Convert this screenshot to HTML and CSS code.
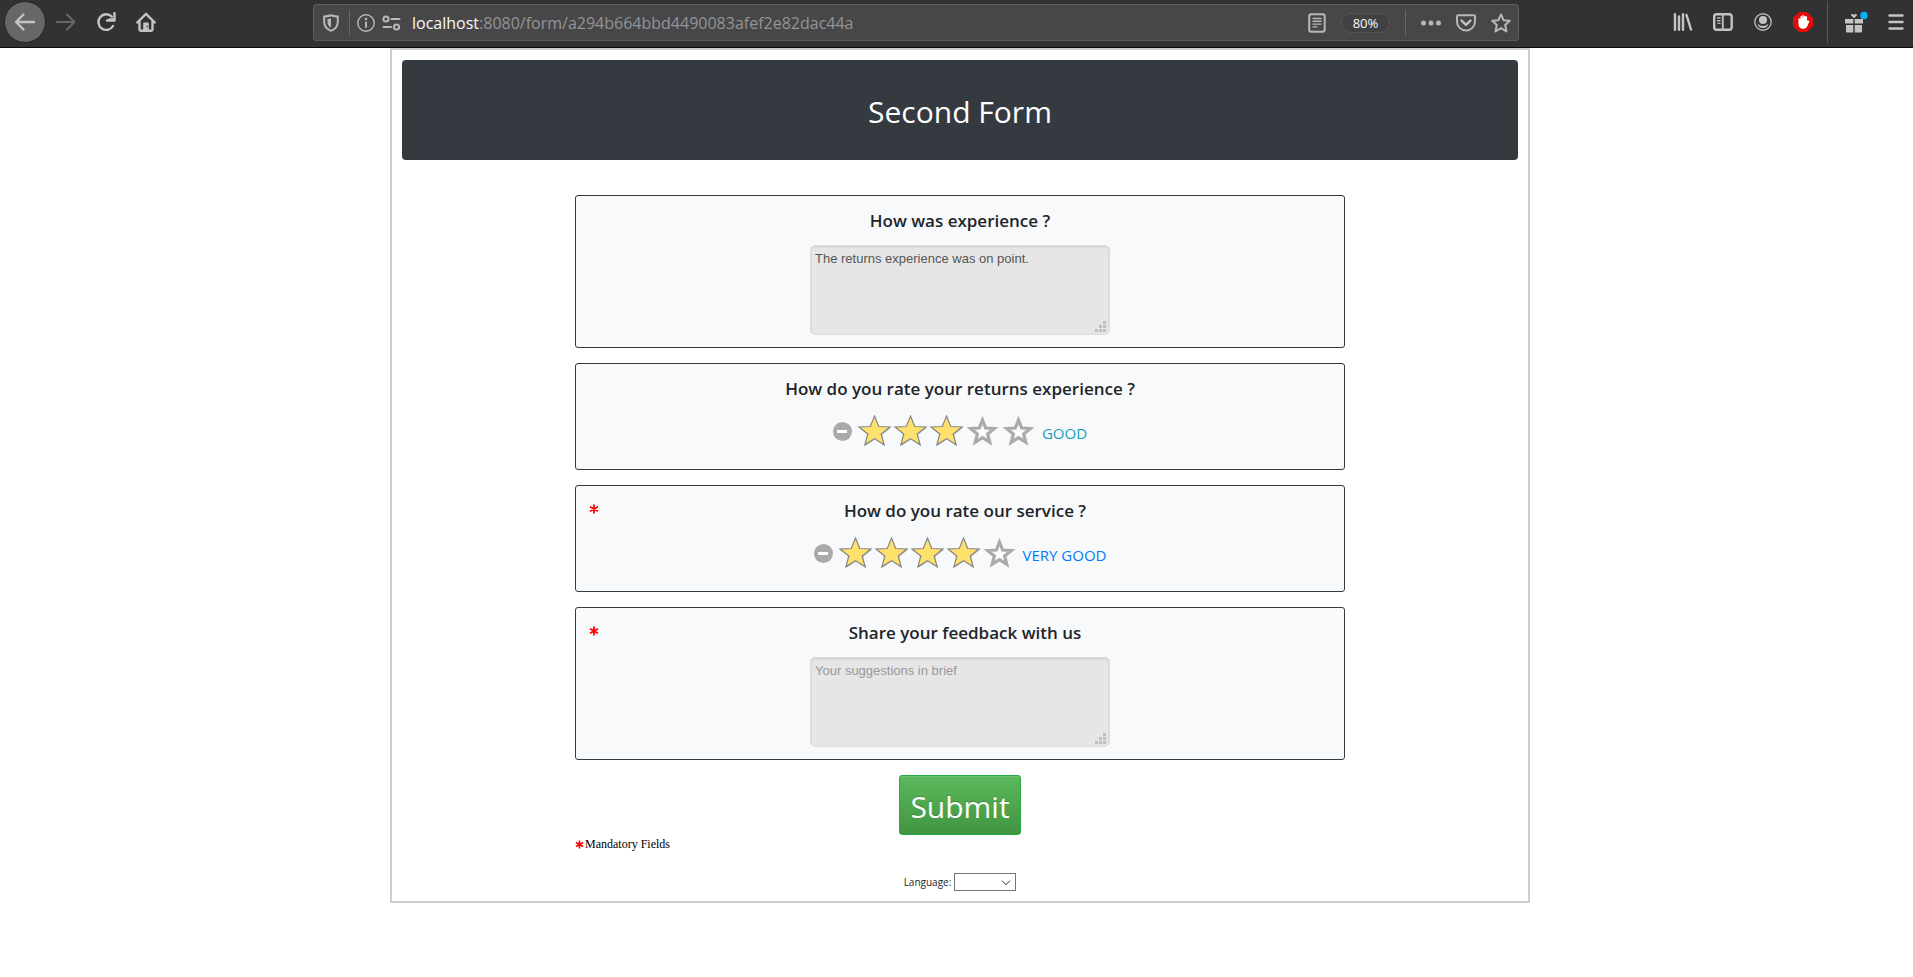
FILE: index.html
```html
<!DOCTYPE html>
<html lang="en">
<head>
<meta charset="utf-8">
<title>Second Form</title>
<link rel="stylesheet" href="styles.css">
</head>
<body>
<svg class="defs" width="0" height="0" aria-hidden="true">
  <symbol id="star-on" viewBox="0 0 36 34">
    <path d="M18.300 2.800L22.600 13.400 34 13.800 25.100 20.900 28 31.800 18.300 25.500 8.600 31.800 11.500 20.900 2.600 13.800 14 13.400z" fill="#c4c4c6"/>
    <path d="M17.500 2L21.700 12.500 33 13 24.200 20 27.100 30.800 17.500 24.600 7.900 30.800 10.800 20 2 13 13.300 12.500z" fill="#fee16c" stroke="#868686" stroke-width="1.200"/>
  </symbol>
  <symbol id="star-off" viewBox="0 0 36 34">
    <path d="M17.500 6L20.700 14 29.300 14.500 22.600 20 24.800 28.300 17.500 23.700 10.200 28.300 12.400 20 5.700 14.500 14.300 14z" fill="#fafbfc" stroke="#aaa" stroke-width="3.200"/>
  </symbol>
  <symbol id="asterisk" viewBox="0 0 10 10">
    <path d="M5 .5v9M1 2.800l8 4.400M9 2.800L1 7.200" stroke="#f00" stroke-width="1.800" fill="none"/>
  </symbol>
</svg>

<header class="toolbar">
  <nav class="nav" aria-label="Navigation">
    <button class="tool back" aria-label="Back"><svg width="22" height="20" viewBox="0 0 22 20"><path d="M20 10H2.500M9.500 2.500L2 10l7.500 7.500" class="line heavy"/></svg></button>
    <button class="tool forward" aria-label="Forward"><svg width="20" height="20" viewBox="0 0 20 20"><path d="M1 10h17.500M11 2.500l7.500 7.500-7.500 7.500" class="line"/></svg></button>
    <button class="tool" aria-label="Reload"><svg width="20" height="20" viewBox="0 0 20 20"><path d="M17 14A7.800 7.800 0 1 1 15.800 4.600" class="line heavy"/><path d="M18.500 1v7.500H11M18.500 2.500v5h-5" class="line heavy"/></svg></button>
    <button class="tool" aria-label="Home"><svg width="20" height="20" viewBox="0 0 20 20"><path d="M1.200 10.500L10 1.800l8.800 8.700M3.500 9.500v8q0 1.200 1.200 1.200h10.600q1.200 0 1.200-1.200v-8" class="line heavy"/><path d="M7.200 19v-7.500q0-1 1-1h3.600q1 0 1 1V19z" fill="#c4c4c5"/><path d="M10.600 14.500h1.200" stroke="#323234" stroke-width="1.500"/></svg></button>
  </nav>
  <div class="urlbar">
    <button class="tool shield" aria-label="Tracking protection"><svg width="16" height="18" viewBox="0 0 16 18"><path d="M8 1.200Q11 2.300 14.800 2.600V8q0 6-6.800 8.800Q1.200 14 1.200 8V2.600Q5 2.300 8 1.200z" class="line"/><path d="M8 4.500v9Q4.500 11.500 4.500 8V5z" fill="#b8b8b9"/></svg></button>
    <button class="tool" aria-label="Site information"><svg width="18" height="18" viewBox="0 0 18 18"><circle cx="9" cy="9" r="8.200" class="line thin"/><path d="M9 8.500v4.500" class="line"/><circle cx="9" cy="5" r="1.300" fill="#b8b8b9"/></svg></button>
    <button class="tool" aria-label="Permissions"><svg width="19" height="16" viewBox="0 0 19 16"><circle cx="4" cy="4" r="2.600" class="line"/><path d="M9.500 4h8M1.500 12h7.500" class="line"/><circle cx="14.500" cy="12" r="2.600" class="line"/></svg></button>
    <p class="address"><span class="host">localhost</span>:8080/form/a294b664bbd4490083afef2e82dac44a</p>
    <div class="actions">
      <button class="tool" aria-label="Reader view"><svg width="18" height="20" viewBox="0 0 18 20"><rect x="1.200" y="1.200" width="15.500" height="17.500" rx="2" class="line"/><path d="M5 5.500h8M5 8.300h8M5 11.100h8M5 13.900h4" class="line thin"/></svg></button>
      <button class="zoom">80%</button>
      <span class="rule"></span>
      <button class="tool" aria-label="Page actions"><svg width="20" height="6" viewBox="0 0 20 6" fill="#b8b8b9"><circle cx="2.500" cy="3" r="2.500"/><circle cx="10" cy="3" r="2.500"/><circle cx="17.500" cy="3" r="2.500"/></svg></button>
      <button class="tool" aria-label="Save to Pocket"><svg width="20" height="18" viewBox="0 0 20 18"><path d="M2 1.200h16q1 0 1 1v5.300a9 9 0 0 1-18 0V2.200q0-1 1-1z" class="line"/><path d="M5.500 6.500L10 10.800l4.500-4.300" class="line heavy"/></svg></button>
      <button class="tool" aria-label="Bookmark"><svg width="20" height="20" viewBox="0 0 20 20"><path d="M10 1.500l2.600 5.700 6.200.6-4.600 4.200 1.300 6.500L10 15.200l-5.500 3.300 1.300-6.500-4.600-4.200 6.200-.6z" class="line"/></svg></button>
    </div>
  </div>
  <div class="extras">
    <button class="tool" aria-label="Library"><svg width="20" height="18" viewBox="0 0 20 18"><path d="M2 1.200v15.600M6 3.500v13.300M10 1.200v15.600M13.500 2L18 16.500" class="line heavy"/></svg></button>
    <button class="tool" aria-label="Sidebars"><svg width="20" height="18" viewBox="0 0 20 18"><rect x="1.200" y="1.200" width="17.500" height="15.500" rx="2.500" class="line heavy"/><path d="M9.800 1v16" class="line"/><path d="M4.500 5h2.500M4.500 7.700h2.500M5 10.400h2" class="line thin"/></svg></button>
    <button class="tool" aria-label="Account"><svg width="20" height="18" viewBox="0 0 20 18"><circle cx="10" cy="9" r="8.200" class="line thin"/><circle cx="10" cy="7" r="4" fill="#c4c4c5"/><path d="M4.500 10.500q2 2.500 5.500 2.500t5.500-2.500Q14.500 15 10 15t-5.500-4.500z" fill="#c4c4c5"/></svg></button>
    <button class="tool" aria-label="Ad blocker"><svg width="20" height="20" viewBox="0 0 20 20"><path d="M6 0h8l6 6v8l-6 6H6l-6-6V6z" fill="#e40b0b"/><path d="M6.200 7v5Q6.500 16 10 16q3 0 4-3l1.500-3.500q-1-.6-2.200 1V5M8.200 10V4.800M10 10V3.500M11.800 10V4.500" fill="#fff" stroke="#fff" stroke-width="1.500" stroke-linecap="round"/></svg></button>
    <span class="rule tall"></span>
    <button class="tool" aria-label="What's new"><svg width="23" height="22" viewBox="0 0 23 22"><path d="M0 8h8.300v4.500H0zM9.700 8H18v4.500H9.700zM1 14h7.300v7.500H2q-1 0-1-1zM9.700 14H17v6.500q0 1-1 1H9.700z" fill="#c4c4c5"/><path d="M9 7.200L6 4.200Q6 2.700 7.500 2.700L9 4l1.500-1.300q1.500 0 1.500 1.500z" fill="#c4c4c5"/><circle cx="19" cy="4.500" r="3.700" fill="#00b3f4"/></svg></button>
    <button class="tool" aria-label="Menu"><svg width="16" height="18" viewBox="0 0 16 18"><path d="M1.500 2.500h13M1.500 9h13M1.500 15.500h13" class="line heavy"/></svg></button>
  </div>
</header>

<main class="page">
  <form class="frame">
    <h1 class="banner">Second Form</h1>
    <div class="questions">
      <section class="card">
        <label class="title" for="experience">How was experience ?</label>
        <div class="field"><textarea id="experience">The returns experience was on point.</textarea><svg class="grip" width="11" height="11" viewBox="0 0 11 11"><path d="M8 0h3v3H8zM4 4h3v3H4zM8 4h3v3H8zM0 8h3v3H0zM4 8h3v3H4zM8 8h3v3H8z"/></svg></div>
      </section>
      <section class="card">
        <h2 class="title">How do you rate your returns experience ?</h2>
        <div class="rating">
          <button type="button" class="clear" aria-label="Clear rating"></button>
          <button type="button" class="star" aria-label="1 star"><svg width="36" height="34"><use href="#star-on"/></svg></button><button type="button" class="star" aria-label="2 stars"><svg width="36" height="34"><use href="#star-on"/></svg></button><button type="button" class="star" aria-label="3 stars"><svg width="36" height="34"><use href="#star-on"/></svg></button><button type="button" class="star" aria-label="4 stars"><svg width="36" height="34"><use href="#star-off"/></svg></button><button type="button" class="star" aria-label="5 stars"><svg width="36" height="34"><use href="#star-off"/></svg></button>
          <span class="caption good">GOOD</span>
        </div>
      </section>
      <section class="card required">
        <svg class="mark" width="10" height="10"><use href="#asterisk"/></svg>
        <h2 class="title">How do you rate our service ?</h2>
        <div class="rating">
          <button type="button" class="clear" aria-label="Clear rating"></button>
          <button type="button" class="star" aria-label="1 star"><svg width="36" height="34"><use href="#star-on"/></svg></button><button type="button" class="star" aria-label="2 stars"><svg width="36" height="34"><use href="#star-on"/></svg></button><button type="button" class="star" aria-label="3 stars"><svg width="36" height="34"><use href="#star-on"/></svg></button><button type="button" class="star" aria-label="4 stars"><svg width="36" height="34"><use href="#star-on"/></svg></button><button type="button" class="star" aria-label="5 stars"><svg width="36" height="34"><use href="#star-off"/></svg></button>
          <span class="caption very-good">VERY GOOD</span>
        </div>
      </section>
      <section class="card required">
        <svg class="mark" width="10" height="10"><use href="#asterisk"/></svg>
        <label class="title" for="feedback">Share your feedback with us</label>
        <div class="field"><textarea id="feedback" placeholder="Your suggestions in brief"></textarea><svg class="grip" width="11" height="11" viewBox="0 0 11 11"><path d="M8 0h3v3H8zM4 4h3v3H4zM8 4h3v3H8zM0 8h3v3H0zM4 8h3v3H4zM8 8h3v3H8z"/></svg></div>
      </section>
      <button type="submit" class="submit">Submit</button>
    </div>
    <p class="note"><svg width="9" height="9"><use href="#asterisk"/></svg>Mandatory Fields</p>
    <div class="language">
      <label for="language">Language:</label>
      <span class="picker"><select id="language"><option></option></select><svg width="10" height="6" viewBox="0 0 10 6"><path d="M1 .7l4 4 4-4" fill="none" stroke="#333"/></svg></span>
    </div>
  </form>
</main>
</body>
</html>
```
FILE: styles.css
```css
* { box-sizing: border-box; }

body {
  margin: 0;
  background: #fff;
  color: #212529;
  font-family: "Open Sans", "Noto Sans", sans-serif;
}

button { font-family: inherit; cursor: pointer; }
.defs { position: absolute; }

.line {
  fill: none;
  stroke: #b8b8b9;
  stroke-width: 2;
  stroke-linecap: round;
  stroke-linejoin: round;
}
.line.thin { stroke-width: 1.4; }
.line.heavy { stroke: #c4c4c5; stroke-width: 2.4; }

/* Browser toolbar */
.toolbar {
  display: flex;
  justify-content: space-between;
  height: 48px;
  padding: 0 9px 0 4px;
  background: #323234;
  border-bottom: 1px solid #0c0c0d;
}
.nav, .extras { display: flex; align-items: center; height: 44px; }
.nav { gap: 20px; width: 309px; }
.tool {
  display: flex;
  align-items: center;
  justify-content: center;
  flex: none;
  padding: 0;
  border: 0;
  background: none;
}
.back {
  width: 42px;
  height: 42px;
  border: 1px solid #252526;
  border-radius: 50%;
  background: #676768;
  margin-right: -10px;
}
.forward .line { stroke: #68686a; }
.urlbar {
  display: flex;
  align-items: center;
  flex: 1;
  gap: 7px;
  height: 37px;
  margin-top: 4px;
  padding: 0 7px 0 9px;
  background: #474749;
  border: 1px solid #5c5c5e;
  border-radius: 3px;
}
.shield {
  height: 26px;
  padding-right: 10px;
  border-right: 1px solid #66666a;
}
.address {
  flex: 1;
  margin: 0 0 0 4px;
  color: #949495;
  font-size: 16px;
  line-height: 20px;
  white-space: nowrap;
}
.host { color: #f9f9fa; }
.actions { display: flex; align-items: center; gap: 15px; }
.zoom {
  width: 49px;
  height: 20px;
  padding: 0;
  color: #f9f9fa;
  background: #414143;
  border: 1px solid #545456;
  border-radius: 10px;
  font-size: 13px;
  line-height: 18px;
}
.rule { width: 1px; height: 26px; background: #66666a; }
.rule.tall { height: 42px; margin: 0 -3px 0 -6px; background: #59595b; }
.extras { gap: 20px; width: 385px; justify-content: flex-end; }

/* Form page */
.page { padding: 0 0 74px 7px; }
.frame {
  max-width: 1140px;
  margin: 0 auto;
  padding: 10px;
  border: 2px solid #cdcdcd;
}
.banner {
  margin: 0 0 35px;
  padding: 32px 0 28px;
  border-radius: 4px;
  background: #343a40;
  color: #fff;
  font-size: 30px;
  font-weight: 400;
  line-height: 40px;
  text-align: center;
}
.questions {
  display: flex;
  flex-direction: column;
  align-items: center;
  gap: 15px;
  max-width: 770px;
  margin: 0 auto;
}
.card {
  position: relative;
  width: 100%;
  padding: 13px 13px 12px;
  background: #f8f9fb;
  border: 1px solid #343a40;
  border-radius: 3px;
  text-align: center;
}
.title {
  display: block;
  margin: 0 0 12px;
  color: #212529;
  font-size: 17px;
  font-weight: 600;
  line-height: 24px;
}
.required .title { padding-left: 10px; }
.mark { position: absolute; left: 13px; top: 18px; }
.field {
  position: relative;
  width: 300px;
  height: 90px;
  margin: 0 auto;
}
.field textarea {
  display: block;
  width: 100%;
  height: 100%;
  padding: 4px;
  color: #555;
  background: #e6e6e6;
  border: 1px solid #dcdddf;
  border-radius: 5px;
  box-shadow: inset 0 1px 2px rgba(0, 0, 0, .12);
  font: 13px/18px "Liberation Sans", sans-serif;
  resize: none;
}
.field textarea::placeholder { color: #999; opacity: 1; }
.grip { position: absolute; right: 4px; bottom: 3px; fill: #bfbfbf; }

.rating {
  display: flex;
  align-items: center;
  justify-content: center;
  height: 36px;
  margin-bottom: 8px;
}
.clear {
  display: flex;
  align-items: center;
  justify-content: center;
  width: 19px;
  height: 19px;
  margin-right: 5px;
  padding: 0;
  border: 0;
  border-radius: 50%;
  background: #aaa;
}
.clear::before { content: ""; width: 10px; height: 3px; background: #fff; }
.star { display: flex; padding: 0; border: 0; background: none; }
.caption { margin: 3px 0 0 5px; font-size: 15px; line-height: 20px; }
.good { color: #17a2b8; }
.very-good { color: #007bff; }

.submit {
  padding: 6px 10px 2px;
  color: #fff;
  background: linear-gradient(#5cb85c, #419641);
  border: 1px solid #28a745;
  border-radius: 3px;
  box-shadow: inset 0 1px 0 rgba(255, 255, 255, .15);
  font-size: 30px;
  line-height: 50px;
  text-shadow: 0 -1px 0 rgba(0, 0, 0, .2);
}
.note {
  display: flex;
  align-items: center;
  gap: 1px;
  max-width: 770px;
  margin: 0 auto 20px;
  color: #000;
  font: 12px/18px "Liberation Serif", serif;
}
.language {
  display: flex;
  align-items: center;
  justify-content: center;
  gap: 3px;
  font-size: 10px;
  line-height: 18px;
}
.picker { position: relative; display: flex; }
.picker select {
  width: 62px;
  height: 18px;
  background: #fff;
  border: 1px solid #767676;
  appearance: none;
}
.picker svg { position: absolute; right: 5px; top: 7px; pointer-events: none; }
```
